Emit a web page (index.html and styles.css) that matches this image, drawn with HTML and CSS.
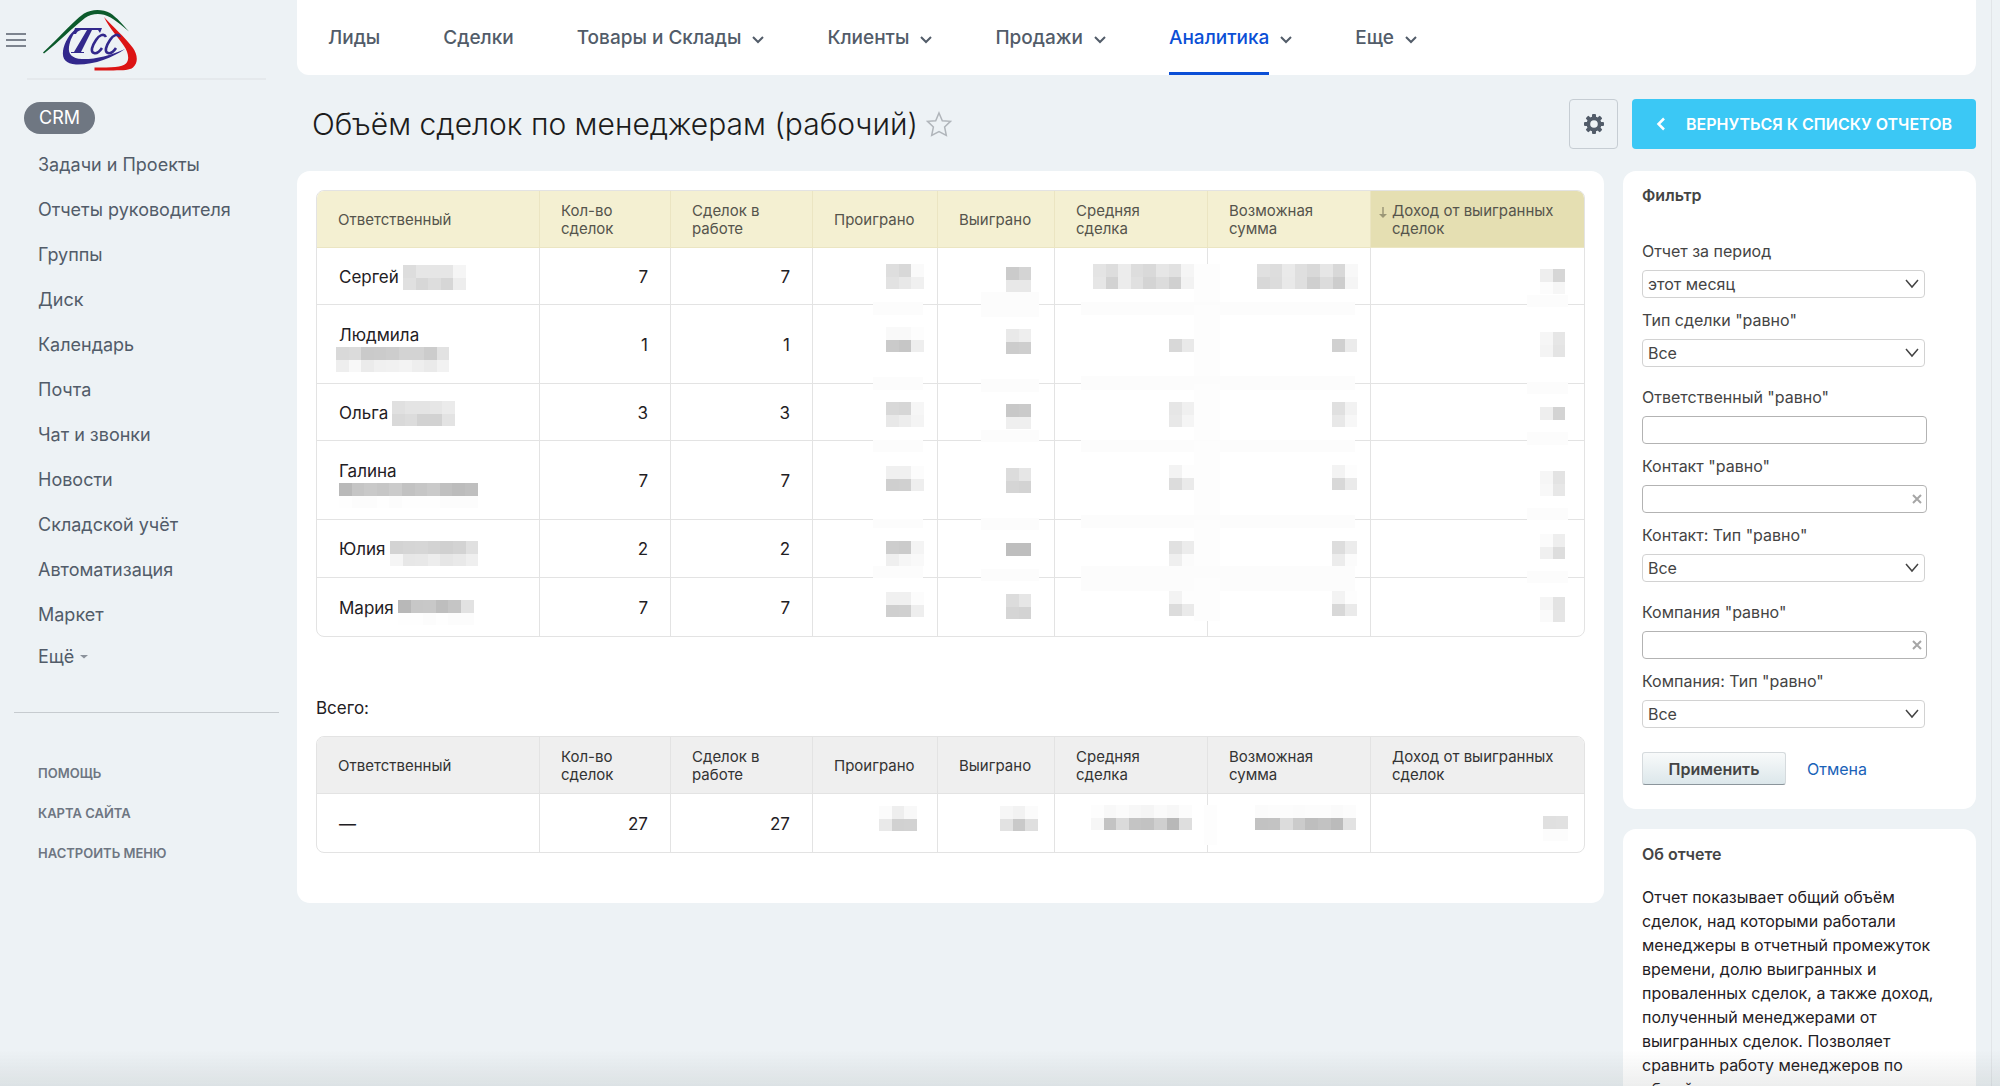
FILE: index.html
```html
<!DOCTYPE html>
<html lang="ru">
<head>
<meta charset="utf-8">
<title>Объём сделок по менеджерам (рабочий)</title>
<link rel="stylesheet" href="styles.css">
<script src="masks.js" defer></script>
</head>
<body>
<div class="layout">
  <aside class="sidebar">
    <header class="brand">
      <button class="burger" aria-label="Меню"><span></span><span></span><span></span></button>
      <a class="logo" href="#" aria-label="ТСС">
        <svg width="96" height="64" viewBox="0 0 96 64">
          <path d="M1 44.500C16 31 29 15 42 5.500C50 .5 61 1 68 5C75 9.500 81 17 87 23.500C79 17 71 9.500 62 6.800C55 5 48 6.500 43 10C30 20 17 34 2 45.500Z" fill="#0b5a2b"/>
          <path d="M62 9C71 19 83 29 91 40C95 46 97 54 91 59.500C86 63.500 75 62 52.500 62.500V59.500C70 59.500 80 59.500 84 55.500C88 51 86 44 82 38C77 30 67 20 62 9Z" fill="#dc1414"/>
          <path d="M34 21C28 25 22 35 21 43C20 51 24 56 34 56.500C52 57 70 50 83 41C68 48 52 51.500 40 51C30 50.500 26 46 27 39C28 32 31 26 35 22L57 21.500V20Z" fill="#32288c"/>
          <path d="M33 20H60L58 25L56 22H50L39 44H42V45H29V44H32L45 22H39Q35 23 34 26H31Z" fill="#32288c"/>
          <path d="M64 29C62 25 57 27 54 32C50 38 48 44 52 45C55 46 58 43 60 40M78 29C76 25 71 27 68 32C64 38 62 44 66 45C69 46 72 43 74 40" fill="none" stroke="#32288c" stroke-width="2.600"/>
        </svg>
      </a>
    </header>
    <nav class="side-nav">
      <a class="active" href="#">CRM</a>
      <a href="#">Задачи и Проекты</a>
      <a href="#">Отчеты руководителя</a>
      <a href="#">Группы</a>
      <a href="#">Диск</a>
      <a href="#">Календарь</a>
      <a href="#">Почта</a>
      <a href="#">Чат и звонки</a>
      <a href="#">Новости</a>
      <a href="#">Складской учёт</a>
      <a href="#">Автоматизация</a>
      <a href="#">Маркет</a>
      <a class="more" href="#">Ещё <svg width="8" height="4" viewBox="0 0 8 4"><path d="M0 0H8L4 3.500Z" fill="#8b929b"/></svg></a>
    </nav>
    <nav class="side-extra">
      <a href="#">ПОМОЩЬ</a>
      <a href="#">КАРТА САЙТА</a>
      <a href="#">НАСТРОИТЬ МЕНЮ</a>
    </nav>
  </aside>

  <div class="page">
    <nav class="top-nav">
      <a href="#"><span>Лиды</span></a>
      <a href="#"><span>Сделки</span></a>
      <a href="#"><span>Товары и Склады</span><svg class="chev" viewBox="0 0 12 8"><path d="M1 1L6 6L11 1"/></svg></a>
      <a href="#"><span>Клиенты</span><svg class="chev" viewBox="0 0 12 8"><path d="M1 1L6 6L11 1"/></svg></a>
      <a href="#"><span>Продажи</span><svg class="chev" viewBox="0 0 12 8"><path d="M1 1L6 6L11 1"/></svg></a>
      <a class="current" href="#"><span>Аналитика</span><svg class="chev" viewBox="0 0 12 8"><path d="M1 1L6 6L11 1"/></svg></a>
      <a href="#"><span>Еще</span><svg class="chev" viewBox="0 0 12 8"><path d="M1 1L6 6L11 1"/></svg></a>
    </nav>

    <div class="title-bar">
      <h1>Объём сделок по менеджерам (рабочий)</h1>
      <button class="star" aria-label="В избранное"><svg width="26" height="26" viewBox="0 0 26 26"><path d="M13 2L16.300 9.800L24.500 10.300L18.600 16L20.300 24.300L13 20.500L5.700 24.300L7.400 16L1.500 10.300L9.700 9.800Z" fill="none" stroke="#b0b5ba" stroke-width="1.500"/></svg></button>
      <button class="gear" aria-label="Настройки"><svg width="20" height="20" viewBox="-10 -10 20 20"><g fill="#525c69"><rect x="-2" y="-10" width="4" height="20" rx="1"/><rect x="-2" y="-10" width="4" height="20" rx="1" transform="rotate(45)"/><rect x="-2" y="-10" width="4" height="20" rx="1" transform="rotate(90)"/><rect x="-2" y="-10" width="4" height="20" rx="1" transform="rotate(135)"/><circle r="7.500"/></g><circle r="3.800" fill="#eef2f4"/></svg></button>
      <button class="back"><svg width="10" height="14" viewBox="0 0 10 14"><path d="M8 1.500L2.500 7L8 12.500" fill="none" stroke="#fff" stroke-width="2.500"/></svg>ВЕРНУТЬСЯ К СПИСКУ ОТЧЕТОВ</button>
    </div>

    <div class="columns">
      <main class="card report">
        <div class="table-box">
        <table>
          <colgroup><col class="c1"><col class="c2"><col class="c3"><col class="c4"><col class="c5"><col class="c6"><col class="c7"><col class="c8"></colgroup>
          <thead><tr>
            <th>Ответственный</th><th>Кол-во сделок</th><th>Сделок в работе</th><th>Проиграно</th><th>Выиграно</th><th>Средняя сделка</th><th>Возможная сумма</th>
            <th class="sorted"><svg class="sort" width="8" height="12" viewBox="0 0 8 12"><path d="M4 0V9" stroke="#9b9777" stroke-width="1.500"/><path d="M0 7H8L4 11Z" fill="#9b9777"/></svg>Доход от выигранных сделок</th>
          </tr></thead>
          <tbody>
            <tr>
              <td class="who">Сергей<i class="blur" data-rows="dd e6 e6 e6 f5/e0 d7 dd d6 ed"></i></td><td>7</td><td>7</td>
              <td><i class="mask" data-strips="-64 54 50 13" data-x="-51" data-y="16" data-rows="de d8 fa/e2 e8 f0"></i></td>
              <td><i class="mask" data-strips="-73 44 58 25" data-x="-48" data-y="19" data-rows="cb d4/e8 e8"></i></td>
              <td><i class="mask" data-x="-114" data-y="16" data-rows="e4 dd ec dd d9 e6 e1 f5/e6 d2 ec e0 d4 dc d0 f2"></i></td>
              <td><i class="mask" data-strips="-176 16 26 42,-289 54 274 13" data-x="-113" data-y="16" data-rows="e0 dd ea df d9 e6 d8 f8/d8 dc e9 df cf dc cd f5"></i></td>
              <td><i class="mask" data-strips="-57 47 41 12" data-x="-44" data-y="21" data-rows="ee d6/fc f6"></i></td>
            </tr>
            <tr>
              <td class="who tall">Людмила<i class="blur wide" data-rows="d9 db ca cb cd d3 d3 cc e2/ee f8 eb f0 f1 f3 ee ea f2"></i></td><td>1</td><td>1</td>
              <td><i class="mask" data-strips="-64 72 50 13" data-x="-51" data-y="22" data-rows="f9 f9 fd/ca c6 ee"></i></td>
              <td><i class="mask" data-strips="-73 74 58 13" data-x="-48" data-y="24" data-rows="e9 ee/cc ce"></i></td>
              <td><i class="mask" data-x="-38" data-y="34" data-rows="d8 e9"></i></td>
              <td><i class="mask" data-strips="-176 0 26 79,-289 71 274 14" data-x="-38" data-y="34" data-rows="d0 eb"></i></td>
              <td><i class="mask" data-strips="-57 77 41 12" data-x="-44" data-y="27" data-rows="f6 e6/f4 e4"></i></td>
            </tr>
            <tr>
              <td class="who">Ольга<i class="blur" data-rows="e0 e4 e4 e6 eb/d9 dc d2 d2 e3"></i></td><td>3</td><td>3</td>
              <td><i class="mask" data-strips="-64 56 50 12" data-x="-51" data-y="18" data-rows="d8 d6 f6/e8 ed f4"></i></td>
              <td><i class="mask" data-strips="-73 46 58 12" data-x="-48" data-y="20" data-rows="c8 ca/ef ef"></i></td>
              <td><i class="mask" data-x="-38" data-y="18" data-rows="e6 f0/e8 f5"></i></td>
              <td><i class="mask" data-strips="-176 0 26 58,-289 56 274 12" data-x="-38" data-y="18" data-rows="e0 f2/e8 f7"></i></td>
              <td><i class="mask" data-strips="-57 48 41 13" data-x="-44" data-y="23" data-rows="ee d3"></i></td>
            </tr>
            <tr>
              <td class="who tall">Галина<i class="blur" data-rows="b9 c5 c9 c6 cb c2 c6 ca c0 bc bf/fe fc fc fe fc fe fe fe fc fc fc"></i></td><td>7</td><td>7</td>
              <td><i class="mask" data-strips="-64 78 50 9" data-x="-51" data-y="25" data-rows="f0 f0 fc/cf d0 ee"></i></td>
              <td><i class="mask" data-strips="-73 77 58 12" data-x="-48" data-y="27" data-rows="dc e6/d5 d3"></i></td>
              <td><i class="mask" data-x="-38" data-y="24" data-rows="f3 fd/dc ea"></i></td>
              <td><i class="mask" data-strips="-176 0 26 79,-289 74 274 13" data-x="-38" data-y="24" data-rows="f3 fd/d8 ea"></i></td>
              <td><i class="mask" data-strips="-57 67 41 12" data-x="-44" data-y="30" data-rows="f6 e3/f8 e7"></i></td>
            </tr>
            <tr>
              <td class="who">Юлия<i class="blur low" data-rows="d3 d5 d6 d3 d0 d3 e0/f5 e7 e8 ed e6 e9 ef"></i></td><td>2</td><td>2</td>
              <td><i class="mask" data-strips="-64 46 50 12" data-x="-51" data-y="21" data-rows="cd cb f4/ef f6 f9"></i></td>
              <td><i class="mask" data-strips="-73 49 58 12" data-x="-48" data-y="23" data-rows="be be"></i></td>
              <td><i class="mask" data-x="-38" data-y="21" data-rows="e1 ec/ef fb"></i></td>
              <td><i class="mask" data-strips="-176 0 26 58,-289 46 274 25" data-x="-38" data-y="21" data-rows="dd ec/ec fb"></i></td>
              <td><i class="mask" data-strips="-57 51 41 12" data-x="-44" data-y="14" data-rows="fb ee/f0 dd"></i></td>
            </tr>
            <tr>
              <td class="who">Мария<i class="blur low" data-rows="b8 c7 c8 be c5 e2/fe fe fc fe fc fc"></i></td><td>7</td><td>7</td>
              <td><i class="mask" data-x="-51" data-y="14" data-rows="f0 f0 fc/cf d0 ee"></i></td>
              <td><i class="mask" data-x="-48" data-y="16" data-rows="dc e6/d5 d3"></i></td>
              <td><i class="mask" data-x="-38" data-y="13" data-rows="f3 fd/dc ea"></i></td>
              <td><i class="mask" data-strips="-176 0 26 43" data-x="-38" data-y="13" data-rows="f3 fd/d8 ea"></i></td>
              <td><i class="mask" data-x="-44" data-y="19" data-rows="f5 e3/fa e5"></i></td>
            </tr>
          </tbody>
        </table>
        </div>
        <h2>Всего:</h2>
        <div class="table-box totals">
        <table>
          <colgroup><col class="c1"><col class="c2"><col class="c3"><col class="c4"><col class="c5"><col class="c6"><col class="c7"><col class="c8"></colgroup>
          <thead><tr>
            <th>Ответственный</th><th>Кол-во сделок</th><th>Сделок в работе</th><th>Проиграно</th><th>Выиграно</th><th>Средняя сделка</th><th>Возможная сумма</th><th>Доход от выигранных сделок</th>
          </tr></thead>
          <tbody><tr>
            <td class="who">—</td><td>27</td><td>27</td>
            <td><i class="mask" data-x="-58" data-y="12" data-rows="fb ee f8/e9 d1 d2"></i></td>
            <td><i class="mask" data-x="-54" data-y="12" data-rows="f6 f2 fb/e2 c9 df"></i></td>
            <td><i class="mask" data-x="-116" data-y="11" data-rows="fd f8 fb f7 f5 fa f7 fc/f6 c3 da c4 c2 cf b8 de"></i></td>
            <td><i class="mask" data-strips="-166 11 13 40" data-x="-115" data-y="11" data-rows="fb fc fc fb fc fc fa fc/c2 c3 dc cb be c2 bb e2"></i></td>
            <td><i class="mask" data-x="-41" data-y="22" data-rows="e0 e1/fc fc"></i></td>
          </tr></tbody>
        </table>
        </div>
      </main>

      <aside class="side">
        <form class="card filter">
          <h3>Фильтр</h3>
          <div class="field"><label for="period">Отчет за период</label><select id="period"><option>этот месяц</option></select></div>
          <div class="field"><label for="deal">Тип сделки "равно"</label><select id="deal"><option>Все</option></select></div>
          <div class="field apart"><label for="resp">Ответственный "равно"</label><input id="resp" type="text"></div>
          <div class="field"><label for="contact">Контакт "равно"</label><div class="clearable"><input id="contact" type="text"><button type="button" aria-label="Очистить"><svg width="10" height="10" viewBox="0 0 10 10"><path d="M1 1L9 9M9 1L1 9"/></svg></button></div></div>
          <div class="field"><label for="ctype">Контакт: Тип "равно"</label><select id="ctype"><option>Все</option></select></div>
          <div class="field apart"><label for="company">Компания "равно"</label><div class="clearable"><input id="company" type="text"><button type="button" aria-label="Очистить"><svg width="10" height="10" viewBox="0 0 10 10"><path d="M1 1L9 9M9 1L1 9"/></svg></button></div></div>
          <div class="field"><label for="comptype">Компания: Тип "равно"</label><select id="comptype"><option>Все</option></select></div>
          <div class="actions"><button class="apply" type="button">Применить</button><a href="#">Отмена</a></div>
        </form>
        <section class="card about">
          <h3>Об отчете</h3>
          <p>Отчет показывает общий объём сделок, над которыми работали менеджеры в отчетный промежуток времени, долю выигранных и проваленных сделок, а также доход, полученный менеджерами от выигранных сделок. Позволяет сравнить работу менеджеров по общей результативности.</p>
        </section>
      </aside>
    </div>
  </div>
</div>
</body>
</html>
```
FILE: masks.js
```js
// Draws the grey blocks that cover private values in the report tables.
const NS = 'http://www.w3.org/2000/svg';
const BLOCK = 12.6;

function addRect(svg, x, y, w, h, fill) {
  const r = document.createElementNS(NS, 'rect');
  const attrs = { x, y, width: w, height: h, fill };
  for (const k in attrs) r.setAttribute(k, attrs[k]);
  svg.appendChild(r);
}

document.querySelectorAll('[data-rows]').forEach((el) => {
  const rows = el.dataset.rows.split('/').map((r) => r.split(' '));
  const x0 = Number(el.dataset.x || 0);
  const y0 = Number(el.dataset.y || 0);
  const svg = document.createElementNS(NS, 'svg');
  svg.setAttribute('width', el.dataset.x ? 1 : Math.round(rows[0].length * BLOCK));
  svg.setAttribute('height', el.dataset.x ? 1 : 25);
  (el.dataset.strips || '').split(',').filter(Boolean).forEach((s) => {
    const [x, y, w, h] = s.split(' ').map(Number);
    addRect(svg, x, y, w, h, w < 30 ? '#fdfdfd' : '#fcfcfc');
  });
  rows.forEach((row, j) => row.forEach((c, i) => {
    const left = Math.round(x0 + i * BLOCK);
    const right = Math.round(x0 + (i + 1) * BLOCK);
    const top = Math.round(y0 + j * BLOCK);
    const bottom = Math.round(y0 + (j + 1) * BLOCK);
    addRect(svg, left, top, right - left, bottom - top, '#' + c + c + c);
  }));
  el.appendChild(svg);
});
```
FILE: styles.css
```css
* { box-sizing: border-box; }

body {
  margin: 0;
  height: 100vh;
  overflow: hidden;
  background: #edf2f5;
  color: #1f2024;
  font: 16px/24px Inter, "Noto Sans", sans-serif;
}

body::after {
  content: "";
  position: fixed;
  inset: auto 0 0 0;
  height: 36px;
  background: linear-gradient(transparent, rgba(80, 90, 90, .1));
  pointer-events: none;
}

a { text-decoration: none; color: inherit; }
button { font: inherit; padding: 0; margin: 0; background: none; border: 0; cursor: pointer; }
h1, h2, h3, p { margin: 0; font-weight: 400; }
svg { display: block; }

.layout { display: flex; min-height: 100vh; padding-right: 8px; }
.layout::after { content: ""; width: 1px; background: #e1e5e8; }

/* Left menu */
.sidebar { flex: none; width: 297px; color: #525c69; }
.brand { display: flex; align-items: center; height: 80px; gap: 16px; padding-left: 6px; background: linear-gradient(#e5e9ec, #e5e9ec) 27px 100% / 239px 2px no-repeat; }
.burger { display: grid; gap: 4px; width: 20px; }
.burger span { height: 2px; background: #7d848e; }
.side-nav { display: flex; flex-direction: column; align-items: flex-start; padding: 16px 14px 35px 24px; font-size: 18px; }
.side-nav a { height: 45px; padding: 0 14px; line-height: 45px; }
.side-nav .active { height: 32px; margin: 6px 0 8px; padding: 0 15px; line-height: 32px; border-radius: 16px; background: #6f7782; color: #fff; }
.side-nav .more { display: flex; align-items: center; gap: 6px; height: 40px; line-height: 40px; }
.side-extra { display: flex; flex-direction: column; margin: 0 18px 0 14px; padding: 40px 0 0 24px; border-top: 1px solid #c6cbcf; font-size: 13px; font-weight: 600; line-height: 40px; color: #6e7682; }

/* Top menu */
.page { flex: 1; min-width: 0; padding-right: 15px; }
.top-nav { display: flex; gap: 63px; height: 75px; padding: 0 31px; background: #fff; border-radius: 0 0 12px 12px; font-size: 19px; font-weight: 500; color: #525c69; }
.top-nav a { display: flex; align-items: flex-start; gap: 11px; }
.top-nav span { height: 75px; line-height: 75px; }
.chev { width: 12px; height: 8px; margin-top: 36px; }
.chev path { fill: none; stroke: #525c69; stroke-width: 2; }
.current span { color: #0b4fd6; border-bottom: 3px solid #0b4fd6; }

.title-bar { display: flex; align-items: center; gap: 14px; height: 96px; padding: 2px 0 0 15px; }
h1 { font-size: 30px; font-weight: 300; line-height: 40px; color: #1c1c1c; }
.star { margin-left: -6px; }
.gear { display: grid; place-items: center; width: 49px; height: 50px; margin-left: auto; border: 1px solid #c6cdd3; border-radius: 4px; }
.back { display: flex; align-items: center; justify-content: center; gap: 20px; width: 344px; height: 50px; border-radius: 4px; background: #3bc8f5; color: #fff; font-size: 16px; font-weight: 600; }

.columns { display: flex; align-items: flex-start; gap: 19px; }
.card { background: #fff; border-radius: 13px; }
.report { flex: 1; min-width: 0; padding: 19px 19px 50px; }
.side { flex: none; width: 353px; display: grid; gap: 20px; }

/* Report tables */
.table-box { overflow: hidden; border: 1px solid #e3e3e3; border-radius: 8px; }
table { width: 100%; table-layout: fixed; border-collapse: separate; border-spacing: 0; font-size: 17px; line-height: 20px; }
.c1 { width: 223px; }
.c2 { width: 131px; }
.c3 { width: 142px; }
.c4 { width: 125px; }
.c5 { width: 117px; }
.c6 { width: 153px; }
.c7 { width: 163px; }
th { height: 57px; padding: 2px 16px 0 21px; border: solid #ebe5c2; border-width: 0 1px 1px 0; background: #f4f0d2; color: #55544c; font-size: 15px; font-weight: 400; line-height: 18px; text-align: left; }
td { position: relative; height: 57px; padding: 1px 22px 0; border: solid #e3e3e3; border-width: 0 1px 1px 0; text-align: right; }
th:last-child, td:last-child { border-right: 0; }
tbody tr:nth-last-child(-n+2) td { height: 58px; }
tbody tr:last-child td { border-bottom: 0; }
.sorted { position: relative; background: #e5dfb2; }
.sort { position: absolute; left: 8px; top: 16px; }
.totals th { background: #efefef; border-color: #e3e3e3; color: #333; }
.who { text-align: left; }
.who.tall { height: 79px; padding-top: 20px; padding-bottom: 11px; }
.blur { display: inline-block; height: 25px; margin: -10px 0 -7px 4px; }
.blur.low { margin-bottom: -11px; }
.tall .blur { display: block; margin: 2px 0 0; }
.tall .blur.wide { margin-left: -3px; }
.mask { position: absolute; z-index: 1; top: 0; right: 0; width: 0; height: 0; }
.mask svg { overflow: visible; }
h2 { margin: 57px 0 14px; font-size: 17px; line-height: 28px; }

/* Filter */
.filter { padding: 13px 49px 24px 19px; color: #444; }
h3 { font-size: 16px; font-weight: 600; line-height: 22px; color: #444; }
.filter h3 { margin-bottom: 33px; }
.field { height: 69px; padding-top: 1px; }
.field.apart { height: 77px; padding-top: 9px; }
label { display: block; height: 30px; line-height: 22px; }
select, input { display: block; width: 100%; height: 28px; padding: 0 5px; border: 1px solid #d2d2d2; border-radius: 4px; background: #fff; color: #444; font: 16px/24px Inter, "Noto Sans", sans-serif; }
select { width: calc(100% - 2px); appearance: none; background: url("data:image/svg+xml,%3Csvg xmlns='http://www.w3.org/2000/svg' width='14' height='10'%3E%3Cpath d='M1 1L7 8L13 1' fill='none' stroke='%23444' stroke-width='1.500'/%3E%3C/svg%3E") right 5px center no-repeat; }
input { border-color: #b3b3b3; }
.clearable { position: relative; }
.clearable button { position: absolute; right: 5px; top: 9px; }
.clearable path { stroke: #a6a6a6; stroke-width: 2; }
.actions { display: flex; align-items: center; gap: 21px; margin-top: 14px; }
.apply { width: 144px; height: 33px; border: 1px solid #d5dadd; border-bottom-color: #8b959b; border-radius: 3px; background: linear-gradient(#f8fafa, #dce7eb); font-weight: 600; color: #444; }
.actions a { color: #1a62b8; }

.about { padding: 14px 30px 30px 19px; }
.about h3 { margin-bottom: 20px; }
```
